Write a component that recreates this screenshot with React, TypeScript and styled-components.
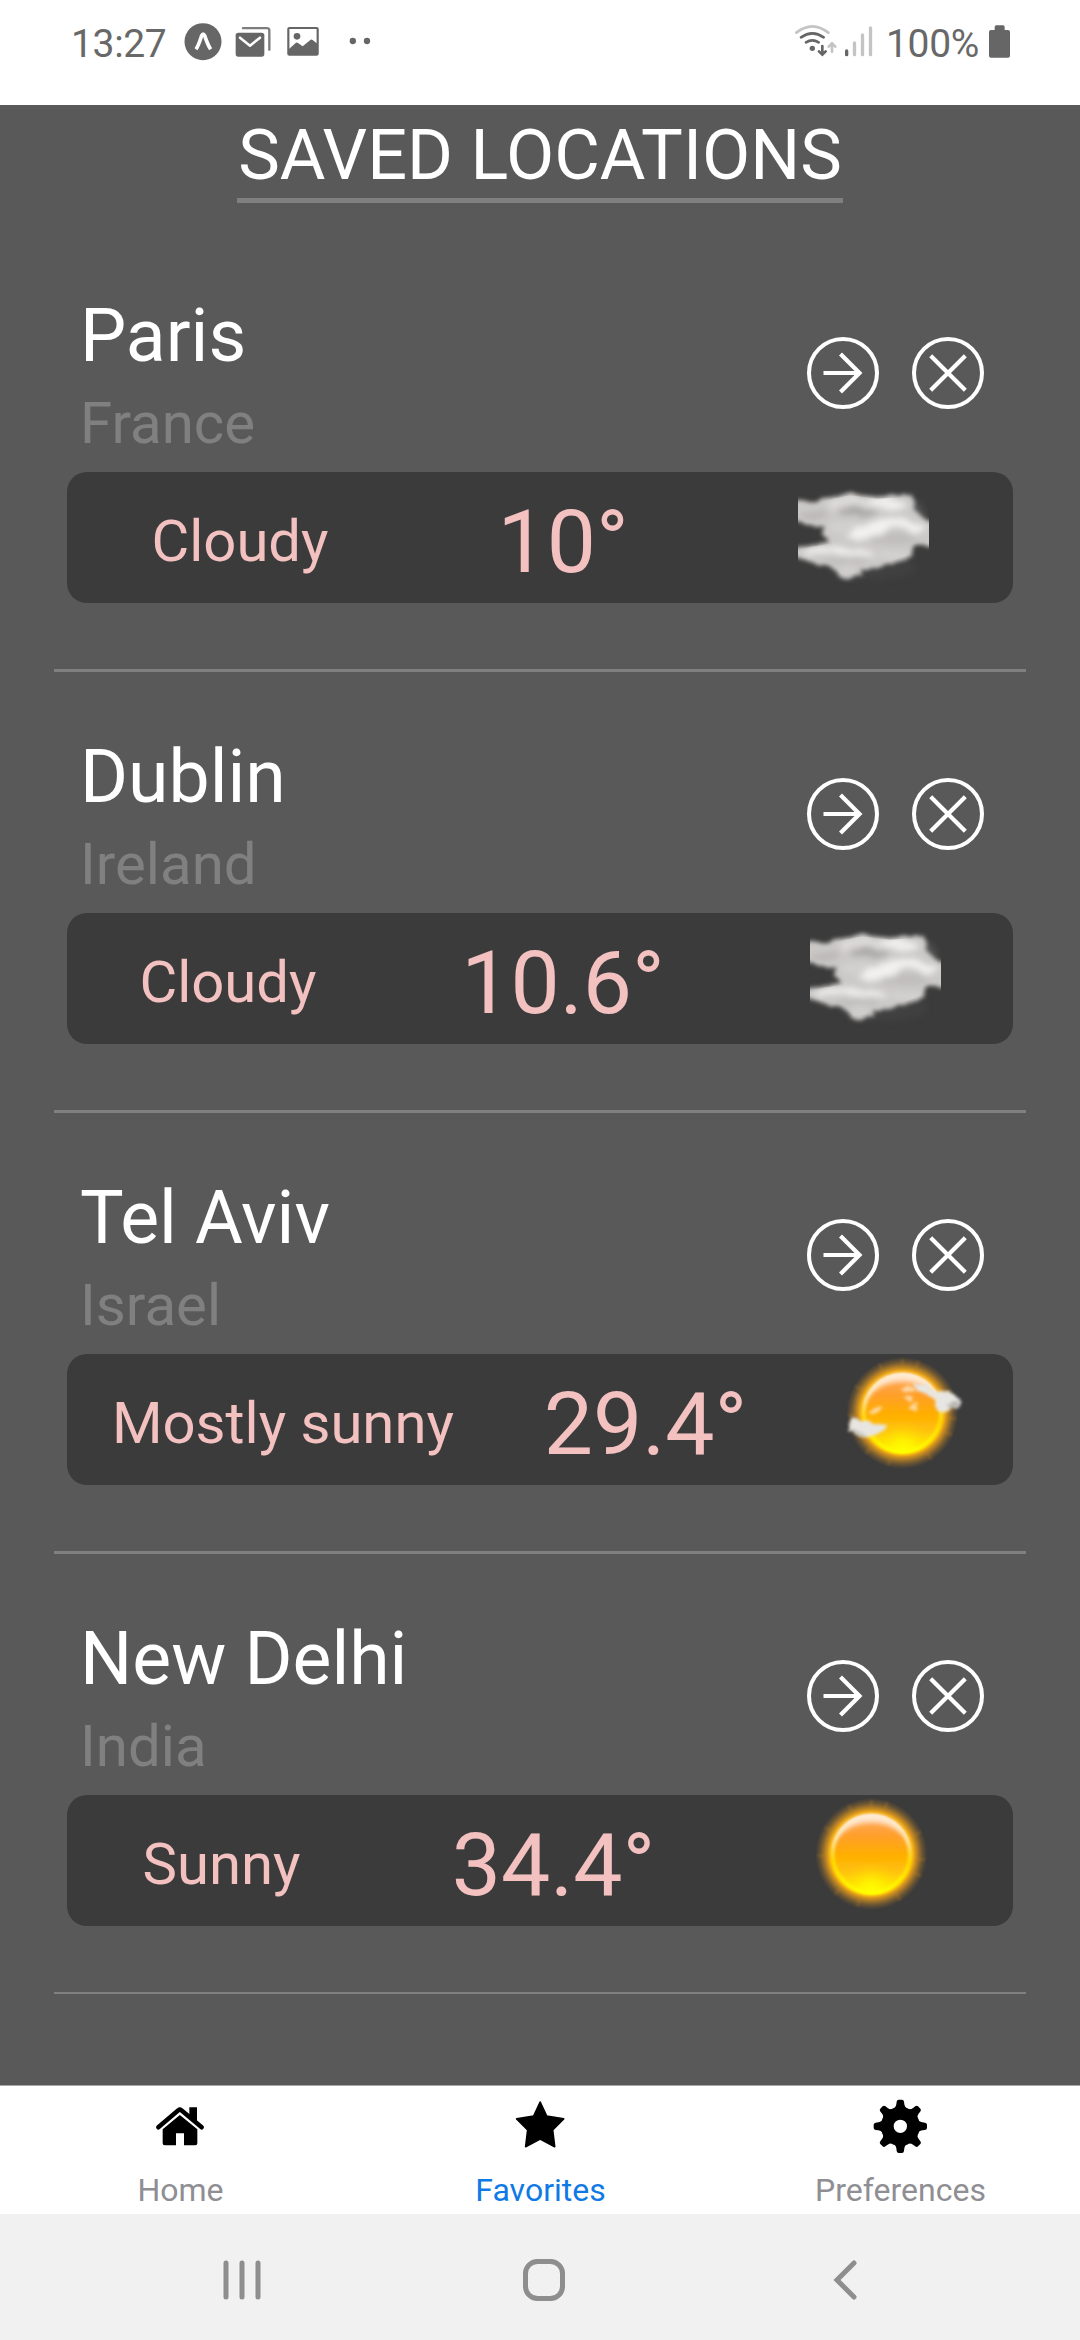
import React from "react";
import styled, { createGlobalStyle } from "styled-components";

const GlobalStyle = createGlobalStyle`
  * { box-sizing: border-box; }
  body { margin: 0; background: #595959; font-family: Roboto, "Noto Sans", sans-serif; }
  svg { display: block; flex: none; }
`;

const Screen = styled.div`
  width: 1080px;
  height: 2340px;
  display: flex;
  flex-direction: column;
  background: #595959;
  overflow: hidden;
`;

/* ---------- status bar ---------- */

const StatusBar = styled.header`
  height: 105px;
  flex: none;
  background: #fff;
  display: flex;
  justify-content: space-between;
  align-items: flex-start;
  padding: 23px 69px 0 71px;
`;

const StatusGroup = styled.div`
  display: flex;
  align-items: flex-start;
`;

const StatusText = styled.span<{ $width: number; $indent: number }>`
  width: ${(p) => p.$width}px;
  padding-left: ${(p) => p.$indent}px;
  font-size: 39px;
  letter-spacing: -0.35px;
  line-height: 42px;
  color: #686868;
  white-space: nowrap;
`;

const GRAY = "#666666";
const PALE = "#c4c4c4";

const ExpoIcon = () => (
  <svg width="38" height="38" viewBox="431 69 114 114">
    <circle cx="488" cy="125" r="55.5" fill={GRAY} />
    <path d="M467 148 C475 136 479 122 484 107 Q488.500 98 493 107 C498 122 503 136 511 148" fill="none" stroke="#fff" strokeWidth="11" />
  </svg>
);

const MailIcon = () => (
  <svg width="37" height="38" viewBox="585 69 111 114">
    <path d="M609 84.500H681Q688 84.500 688 91.500V149" fill="none" stroke="#7d7d7d" strokeWidth="7" strokeLinecap="round" />
    <rect x="587" y="98" width="86" height="72" rx="8" fill={GRAY} />
    <path d="M600 113 630 137 660 113" fill="none" stroke="#fff" strokeWidth="7.500" strokeLinecap="round" strokeLinejoin="round" />
  </svg>
);

const PictureIcon = () => (
  <svg width="33" height="38" viewBox="741 69 99 114">
    <rect x="745" y="84" width="88" height="80" rx="3" fill="none" stroke={GRAY} strokeWidth="6.500" />
    <circle cx="771" cy="109" r="10" fill={GRAY} />
    <path d="M746 148 768 128Q771 126 774 129L788 139 812 119Q815 117 818 120L833 132V164H746Z" fill={GRAY} />
  </svg>
);

const MoreIcon = () => (
  <svg width="22" height="38" viewBox="927 69 66 114">
    <circle cx="938.500" cy="123" r="9.500" fill={GRAY} />
    <circle cx="981" cy="123" r="9.500" fill={GRAY} />
  </svg>
);

const WifiIcon = () => (
  <svg width="43" height="38" viewBox="102 69 129 114">
    <g fill="none" strokeWidth="8" strokeLinecap="round">
      <path d="M109 98Q157 60 205 98" stroke={PALE} />
      <path d="M123 112Q157 88 191 112" stroke={GRAY} />
      <path d="M138 127Q157 115 176 127" stroke={GRAY} />
      <path d="M187 138V163M177 154 187 164 197 154" stroke={GRAY} />
      <path d="M216 155V130M206 140 216 130 226 140" stroke={PALE} />
    </g>
    <circle cx="157" cy="145" r="8" fill={GRAY} />
  </svg>
);

const SignalIcon = () => (
  <svg width="30" height="38" viewBox="252 69 90 114">
    <g strokeWidth="10" strokeLinecap="round">
      <path d="M260 153V164" stroke={GRAY} />
      <path d="M283.500 129V164M307.500 105V164M331.500 84V164" stroke={PALE} />
    </g>
  </svg>
);

const BatteryIcon = () => (
  <svg width="22" height="38" viewBox="687 69 66 114">
    <rect x="687" y="90" width="63" height="83" rx="6" fill={GRAY} />
    <rect x="704" y="76" width="30" height="24" rx="5" fill={GRAY} />
  </svg>
);

const IconSlot = styled.div<{ $gap: number }>`
  margin-left: ${(p) => p.$gap}px;
`;

/* ---------- saved locations ---------- */

const Content = styled.main`
  flex: 1;
  display: flex;
  flex-direction: column;
  align-items: center;
`;

const Title = styled.h1`
  margin: 0 0 28px;
  height: 98px;
  width: 606px;
  padding-top: 9px;
  border-bottom: 5px solid #808080;
  font-size: 70.1px;
  font-weight: 400;
  line-height: 82px;
  color: #fff;
  text-align: center;
  white-space: nowrap;
`;

const LocationRow = styled.section`
  width: 972px;
  height: 441px;
  padding: 0 13px;
  border-bottom: 3px solid #808080;

  &:last-child {
    border-bottom-width: 2px;
    height: 440px;
  }
`;

const LocationHeader = styled.div`
  height: 241px;
  padding: 62px 17px 0 13px;
  display: flex;
  justify-content: space-between;
`;

const Place = styled.div`
  display: flex;
  flex-direction: column;
  gap: 10px;
`;

const City = styled.h2`
  margin: 0;
  font-size: 73.3px;
  font-weight: 400;
  line-height: 86px;
  color: #fff;
`;

const Country = styled.span`
  font-size: 58.2px;
  line-height: 68px;
  color: #808080;
`;

const Actions = styled.div`
  display: flex;
  gap: 33px;
  padding: 43.6px 12px 0 0;
`;

const RoundButton = styled.button`
  width: 72px;
  height: 72px;
  padding: 0;
  border: 4px solid #fff;
  border-radius: 50%;
  background: transparent;
  display: grid;
  place-items: center;
`;

const WeatherBar = styled.div`
  height: 131px;
  border-radius: 20px;
  background: #3b3b3b;
  color: #f3c1c0;
  display: flex;
  justify-content: space-around;
  align-items: center;
`;

const Condition = styled.span`
  padding-top: 7px;
  font-size: 58px;
  line-height: 68px;
`;

const Temperature = styled.span`
  padding-top: 9px;
  font-size: 87.6px;
  line-height: 102px;
`;

const ArrowIcon = () => (
  <svg width="48" height="48" viewBox="-24 -24 48 48" fill="none" stroke="#fff" strokeWidth="4.200">
    <path d="M-19.500 0H16M-2.500-19 16.500 0-2.500 19" />
  </svg>
);

const CrossIcon = () => (
  <svg width="48" height="48" viewBox="-24 -24 48 48" fill="none" stroke="#fff" strokeWidth="4.200">
    <path d="M-17.300-17.300 17.300 17.300M17.300-17.300-17.300 17.300" />
  </svg>
);

/* ---------- weather pictures ---------- */

const CloudPicture = ({ id }: { id: string }) => (
  <svg width="131" height="131" viewBox="111 486 393 393">
    <defs>
      <filter id={`${id}-edge`} x="-10%" y="-10%" width="120%" height="120%">
        <feTurbulence type="fractalNoise" baseFrequency="0.04" numOctaves="2" seed="4" result="n" />
        <feDisplacementMap in="SourceGraphic" in2="n" scale="14" xChannelSelector="R" yChannelSelector="G" />
        <feGaussianBlur stdDeviation="6" />
      </filter>
      <filter id={`${id}-soft`} x="-20%" y="-40%" width="140%" height="180%">
        <feTurbulence type="fractalNoise" baseFrequency="0.02" numOctaves="2" seed="9" result="n" />
        <feDisplacementMap in="SourceGraphic" in2="n" scale="24" xChannelSelector="R" yChannelSelector="G" />
        <feGaussianBlur stdDeviation="9" />
      </filter>
      <clipPath id={`${id}-clip`}>
        <path d="M90 582 111 576 150 584 205 568 268 556 350 566 446 560 454 600 474 624 530 642V702L450 700 444 734 400 750 340 768 286 772 278 790 244 794 228 780 205 760 160 756 90 734V720L214 700 194 674 198 644 111 626Z" />
      </clipPath>
    </defs>
    <ellipse cx="330" cy="772" rx="130" ry="40" fill="#474747" opacity=".45" filter={`url(#${id}-soft)`} />
    <ellipse cx="474" cy="606" rx="20" ry="34" fill="#777" opacity=".35" filter={`url(#${id}-soft)`} />
    <g filter={`url(#${id}-edge)`}>
      <path
        d="M90 578 111 568 150 578 205 562 240 556 268 546 300 556 350 560 400 556 425 552 452 554 458 574 462 602 480 620 504 632 530 636V708L490 708 458 706 452 738 420 754 380 764 340 778 300 776 306 796 284 796 265 808 240 806 226 784 205 768 160 762 111 744 90 740V714L140 708 206 694 186 676 190 652 150 646 111 634 90 630Z"
        fill="#cbc9c7"
      />
    </g>
    <g clipPath={`url(#${id}-clip)`}>
      <g filter={`url(#${id}-soft)`}>
        <path d="M200 574 270 558 350 566 320 588 250 588 210 596Z" fill="#dedcdb" />
        <ellipse cx="290" cy="606" rx="60" ry="12" fill="#a9a7a5" />
        <ellipse cx="380" cy="582" rx="56" ry="16" fill="#f0eeec" transform="rotate(12 380 582)" />
        <ellipse cx="160" cy="616" rx="44" ry="12" fill="#b9b7b5" />
        <ellipse cx="250" cy="650" rx="46" ry="14" fill="#d3d1cf" />
        <path d="M250 682 290 652 350 634 392 618 440 630 500 656 460 668 400 648 350 672 300 690Z" fill="#f3f1ef" />
        <ellipse cx="396" cy="686" rx="76" ry="18" fill="#c0bebc" />
        <path d="M120 724 180 714 250 712 320 724 350 740 290 736 220 730 140 738Z" fill="#f0efed" />
        <ellipse cx="250" cy="752" rx="70" ry="8" fill="#bcbab8" />
        <ellipse cx="400" cy="736" rx="46" ry="9" fill="#d6d4d2" />
        <ellipse cx="260" cy="786" rx="28" ry="14" fill="#d0cecc" />
      </g>
    </g>
  </svg>
);

const SunPicture = ({ id, cloudy }: { id: string; cloudy?: boolean }) => (
  <svg width="131" height="131" viewBox="-196 -177 393 393">
    <defs>
      <radialGradient id={`${id}-glow`} gradientUnits="userSpaceOnUse" cx="0" cy="0" r="168">
        <stop offset=".7" stopColor="#ffc400" />
        <stop offset=".76" stopColor="#f6ac14" stopOpacity=".95" />
        <stop offset=".83" stopColor="#e59b1e" stopOpacity=".68" />
        <stop offset=".91" stopColor="#cf8c22" stopOpacity=".32" />
        <stop offset="1" stopColor="#a87428" stopOpacity="0" />
      </radialGradient>
      <linearGradient id={`${id}-disc`} x1="0" y1="0" x2="0" y2="1">
        <stop offset="0" stopColor="#ffab62" />
        <stop offset=".27" stopColor="#ff9f2c" />
        <stop offset=".5" stopColor="#ffad00" />
        <stop offset=".72" stopColor="#ffc20c" />
        <stop offset=".93" stopColor="#ffee00" />
        <stop offset="1" stopColor="#ffff00" />
      </linearGradient>
      <radialGradient id={`${id}-base`} gradientUnits="userSpaceOnUse" cx="0" cy="116" r="95">
        <stop offset="0" stopColor="#ffff00" />
        <stop offset=".35" stopColor="#fff600" stopOpacity=".8" />
        <stop offset="1" stopColor="#ffd000" stopOpacity="0" />
      </radialGradient>
      <linearGradient id={`${id}-rim`} x1="0" y1="0" x2="0" y2="1">
        <stop offset="0" stopColor="#fff0de" />
        <stop offset=".35" stopColor="#ffe9a0" />
        <stop offset=".6" stopColor="#ffe400" />
        <stop offset="1" stopColor="#ffff00" />
      </linearGradient>
      <filter id={`${id}-b4`} x="-20%" y="-20%" width="140%" height="140%">
        <feGaussianBlur stdDeviation="4" />
      </filter>
      <filter id={`${id}-b8`} x="-30%" y="-30%" width="160%" height="160%">
        <feGaussianBlur stdDeviation="8" />
      </filter>
      <filter id={`${id}-puff`} x="-30%" y="-30%" width="160%" height="160%">
        <feTurbulence type="fractalNoise" baseFrequency="0.05" numOctaves="2" seed="7" result="n" />
        <feDisplacementMap in="SourceGraphic" in2="n" scale="14" xChannelSelector="R" yChannelSelector="G" />
        <feGaussianBlur stdDeviation="5.500" />
      </filter>
      <clipPath id={`${id}-clip`}>
        <circle r="121" />
      </clipPath>
    </defs>
    <circle r="168" fill={`url(#${id}-glow)`} />
    <g stroke="#c98b25" strokeWidth="6" opacity=".38" filter={`url(#${id}-b4)`}>
      {[0, 17, 66, 96, 114, 148, 195, 222, 268, 300, 335].map((angle) => (
        <path key={angle} d="M0-138V-163" transform={`rotate(${angle})`} />
      ))}
    </g>
    <circle r="121" fill={`url(#${id}-disc)`} filter={`url(#${id}-b4)`} />
    <g clipPath={`url(#${id}-clip)`}>
      <path
        d="M-124 0A124 124 0 0 1 124 0C112-58 62-94 0-94S-112-58-124 0Z"
        fill="#fff0e2"
        opacity=".85"
        filter={`url(#${id}-b8)`}
      />
      <circle cy="116" r="95" fill={`url(#${id}-base)`} />
    </g>
    <circle r="116" fill="none" stroke={`url(#${id}-rim)`} strokeWidth="9" filter={`url(#${id}-b4)`} />
    {cloudy && (
      <g filter={`url(#${id}-puff)`}>
        <path d="M-154 12-138 16-128 26-106 24-84 34-52 34-44 42-66 58-88 64-104 74-128 70-142 58-162 54Z" fill="#e8e6e2" />
        <path d="M-160 52-140 48-116 62-104 70-130 70Z" fill="#c9c7c3" />
        <path d="M34-86 50-90 76-84 98-64 120-66 146-62 162-50 180-34 168-18 146-14 128-2 106-4 98-22 100-44 70-58 42-68Z" fill="#e8e6e2" />
        <path d="M130-26 176-38 164-20 144-14Z" fill="#b9b7b4" />
        <path d="M-8-72 22-82 38-70 12-62ZM0-46 30-54 24-32ZM16-14 42-32 44-4ZM-102-2-80-16-54-18-88 6Z" fill="#ffe2b8" opacity=".85" />
      </g>
    )}
  </svg>
);

/* ---------- tab bar ---------- */

const TabBar = styled.nav`
  height: 129px;
  flex: none;
  display: grid;
  grid-template-columns: repeat(3, 1fr);
  border-top: 1px solid #a7a7a7;
  background: #fff;
`;

const Tab = styled.a<{ $active?: boolean }>`
  display: flex;
  flex-direction: column;
  align-items: center;
  padding-top: 11px;
  font-size: 32px;
  line-height: 40px;
  color: ${(p) => (p.$active ? "#0f7ae5" : "#8e8e93")};
`;

const TabIcon = styled.div`
  height: 60px;
  margin-bottom: 13px;
`;

const TabLabel = styled.span`
  padding-left: 1px;
`;

const HomeIcon = () => (
  <svg width="60" height="60" viewBox="152 80 180 180">
    <path d="M177 171 237 120Q241.500 116 246 120L307 171" fill="none" stroke="#000" strokeWidth="13.500" strokeLinecap="round" strokeLinejoin="round" />
    <path d="M270 111H293V156L270 137Z" />
    <path d="M241.500 134 294 177V219Q294 225 288 225H254V189H230V225H196Q190 225 190 219V177Z" />
  </svg>
);

const StarIcon = () => (
  <svg width="60" height="60" viewBox="1231 80 180 180">
    <path
      d="M1321.500 95 1341 137.500 1392 145.500 1359 179 1365 229 1321.500 206 1278 229 1284 179 1251 145.500 1302 137.500Z"
      stroke="#000"
      strokeWidth="5"
      strokeLinejoin="round"
    />
  </svg>
);

const GearIcon = () => (
  <svg width="60" height="60" viewBox="-91 -88 180 180">
    <circle r="39" fill="none" stroke="#000" strokeWidth="38" />
    {[0, 45, 90, 135, 180, 225, 270, 315].map((angle) => (
      <path key={angle} d="M-24-53Q-14-54-12-66L-11-74Q-10-80-5-80H5Q10-80 11-74L12-66Q14-54 24-53Z" transform={`rotate(${angle})`} />
    ))}
  </svg>
);

/* ---------- system navigation ---------- */

const SystemBar = styled.footer`
  height: 126px;
  flex: none;
  padding: 6px 0 0 90.5px;
  background: #f1f1f1;
  display: grid;
  grid-template-columns: repeat(3, 302.4px);
  place-items: center;
`;

const SystemIcon = ({ children }: { children: React.ReactNode }) => (
  <svg width="46" height="46" viewBox="-23 -23 46 46" fill="none" stroke="#8e8e8e" strokeWidth="5" strokeLinecap="round">
    {children}
  </svg>
);

type Sky = "cloud" | "sunCloud" | "sun";

const locations: { city: string; country: string; condition: string; temp: string; sky: Sky }[] = [
  { city: "Paris", country: "France", condition: "Cloudy", temp: "10°", sky: "cloud" },
  { city: "Dublin", country: "Ireland", condition: "Cloudy", temp: "10.6°", sky: "cloud" },
  { city: "Tel Aviv", country: "Israel", condition: "Mostly sunny", temp: "29.4°", sky: "sunCloud" },
  { city: "New Delhi", country: "India", condition: "Sunny", temp: "34.4°", sky: "sun" },
];

export default function App() {
  return (
    <Screen>
      <GlobalStyle />
      <StatusBar>
        <StatusGroup>
          <StatusText $width={113} $indent={0}>13:27</StatusText>
          <ExpoIcon />
          <IconSlot $gap={13}><MailIcon /></IconSlot>
          <IconSlot $gap={15}><PictureIcon /></IconSlot>
          <IconSlot $gap={29}><MoreIcon /></IconSlot>
        </StatusGroup>
        <StatusGroup>
          <WifiIcon />
          <IconSlot $gap={7}><SignalIcon /></IconSlot>
          <StatusText $width={115} $indent={12}>100%</StatusText>
          <BatteryIcon />
        </StatusGroup>
      </StatusBar>

      <Content>
        <Title>SAVED LOCATIONS</Title>
        {locations.map((place, i) => (
          <LocationRow key={place.city}>
            <LocationHeader>
              <Place>
                <City>{place.city}</City>
                <Country>{place.country}</Country>
              </Place>
              <Actions>
                <RoundButton aria-label="Open"><ArrowIcon /></RoundButton>
                <RoundButton aria-label="Remove"><CrossIcon /></RoundButton>
              </Actions>
            </LocationHeader>
            <WeatherBar>
              <Condition>{place.condition}</Condition>
              <Temperature>{place.temp}</Temperature>
              {place.sky === "cloud" ? (
                <CloudPicture id={`cloud${i}`} />
              ) : (
                <SunPicture id={`sun${i}`} cloudy={place.sky === "sunCloud"} />
              )}
            </WeatherBar>
          </LocationRow>
        ))}
      </Content>

      <TabBar>
        <Tab>
          <TabIcon><HomeIcon /></TabIcon>
          <TabLabel>Home</TabLabel>
        </Tab>
        <Tab $active>
          <TabIcon><StarIcon /></TabIcon>
          <TabLabel>Favorites</TabLabel>
        </Tab>
        <Tab>
          <TabIcon><GearIcon /></TabIcon>
          <TabLabel>Preferences</TabLabel>
        </Tab>
      </TabBar>

      <SystemBar>
        <SystemIcon><path d="M-16-17V17M0-17V17M16-17V17" /></SystemIcon>
        <SystemIcon><rect x="-18.500" y="-18.500" width="37" height="37" rx="12" /></SystemIcon>
        <SystemIcon><path d="M8-17-9 0 8 17" /></SystemIcon>
      </SystemBar>
    </Screen>
  );
}
